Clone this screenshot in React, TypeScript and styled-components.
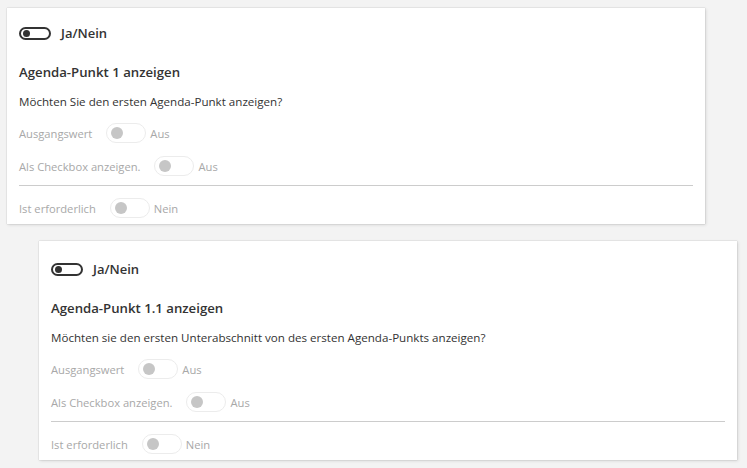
import React from 'react';
import styled, {createGlobalStyle} from 'styled-components';

const GlobalStyle = createGlobalStyle`
  body {
    margin: 0;
    background: #f3f3f3;
    font-family: 'Open Sans', 'Noto Sans', sans-serif;
  }
`;

const Page = styled.div`
  display: flex;
  flex-direction: column;
  gap: 17px;
  padding: 8px 10px 8px 7px;
`;

const Card = styled.section<{ $nested?: boolean }>`
  width: 698px;
  box-sizing: border-box;
  margin-left: ${p => (p.$nested ? '32px' : '0')};
  padding: ${p => (p.$nested ? '18px' : '15px')} 12px 6px 12px;
  background: #fff;
  box-shadow: 0 0 1px rgba(0, 0, 0, 0.25), 1px 1px 3px rgba(0, 0, 0, 0.12);
`;

const Header = styled.div`
  display: flex;
  align-items: center;
  height: 20px;
  gap: 10px;
`;

const HeaderLabel = styled.span`
  font-size: 13px;
  font-weight: 600;
  color: #333;
`;

const DarkTrack = styled.span`
  position: relative;
  display: inline-block;
  box-sizing: border-box;
  width: 32px;
  height: 13px;
  border: 2px solid #333;
  border-radius: 7px;
  &::after {
    content: '';
    position: absolute;
    left: 2px;
    top: 1px;
    width: 7px;
    height: 7px;
    border-radius: 50%;
    background: #333;
  }
`;

const Heading = styled.h3`
  margin: 20px 0 0;
  font-size: 13.2px;
  line-height: 18px;
  font-weight: 600;
  color: #333;
`;

const Description = styled.p`
  margin: 13px 0 0;
  font-size: 11.6px;
  line-height: 16px;
  color: #333;
`;

const Row = styled.div`
  display: flex;
  align-items: center;
  height: 20px;
  margin-top: 13px;
  font-size: 11.2px;
  color: #a8a8a8;
`;

const Label = styled.span`
  margin-right: 14px;
`;

const LightTrack = styled.span`
  position: relative;
  display: inline-block;
  box-sizing: border-box;
  width: 40px;
  height: 20px;
  border: 1px solid #ececec;
  border-radius: 10px;
  margin-right: 4px;
  &::after {
    content: '';
    position: absolute;
    left: 4px;
    top: 3px;
    width: 12px;
    height: 12px;
    border-radius: 50%;
    background: #c6c6c6;
  }
`;

const Divider = styled.hr`
  margin: 9px 0 0;
  border: none;
  border-top: 1px solid #cccccc;
  & + ${Row} {
    margin-top: 12px;
  }
`;

type Item = { label: string, value: string };

const Setting = ({label, value}: Item) => (
  <Row>
    <Label>{label}</Label>
    <LightTrack />
    <span>{value}</span>
  </Row>
);

type CardProps = {
  nested?: boolean,
  title: string,
  question: string,
};

const QuestionCard = ({nested, title, question}: CardProps) => (
  <Card $nested={nested}>
    <Header>
      <DarkTrack />
      <HeaderLabel>Ja/Nein</HeaderLabel>
    </Header>
    <Heading>{title}</Heading>
    <Description>{question}</Description>
    <Setting label="Ausgangswert" value="Aus" />
    <Setting label="Als Checkbox anzeigen." value="Aus" />
    <Divider />
    <Setting label="Ist erforderlich" value="Nein" />
  </Card>
);

export default function App() {
  return (
    <Page>
      <GlobalStyle />
      <QuestionCard
        title="Agenda-Punkt 1 anzeigen"
        question="Möchten Sie den ersten Agenda-Punkt anzeigen?"
      />
      <QuestionCard
        nested
        title="Agenda-Punkt 1.1 anzeigen"
        question="Möchten sie den ersten Unterabschnitt von des ersten Agenda-Punkts anzeigen?"
      />
    </Page>
  );
}
